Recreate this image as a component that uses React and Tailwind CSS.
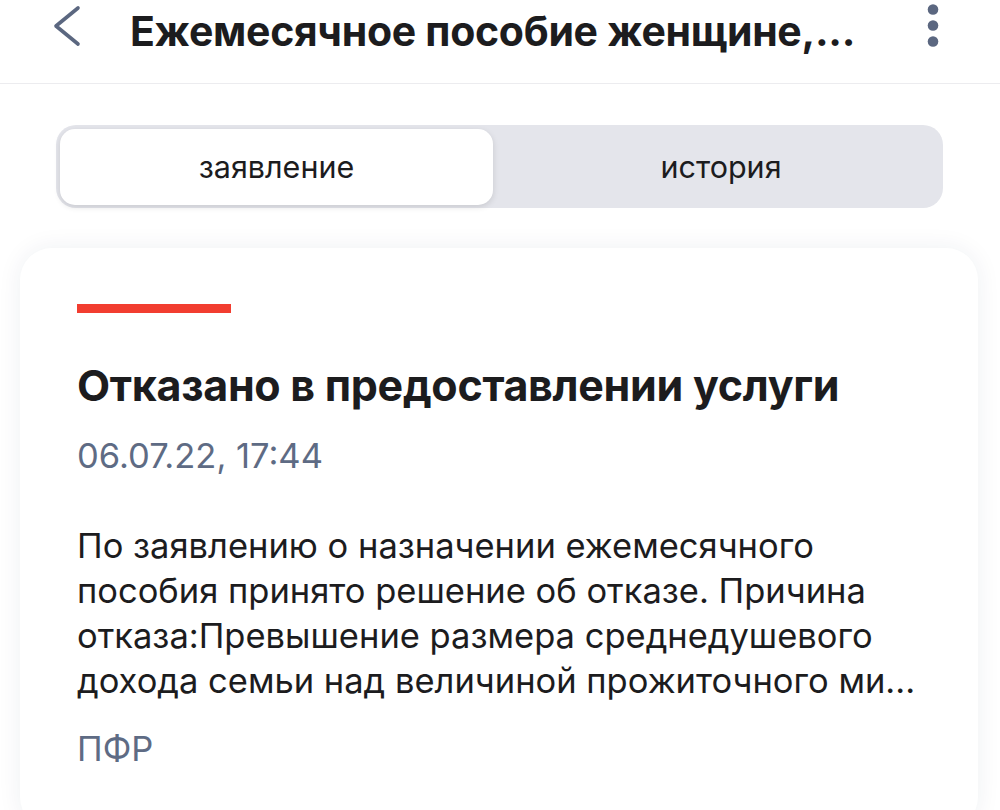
import React, { useState } from 'react';

const font = { fontFamily: 'Inter, "Noto Sans", sans-serif' };

function BackIcon() {
  return (
    <svg width="32" height="48" viewBox="0 0 32 48" fill="none">
      <path d="M28 4 L6 22 L28 40" stroke="#5b6780" strokeWidth="3.6" strokeLinecap="round" strokeLinejoin="round" />
    </svg>
  );
}

function MoreIcon() {
  return (
    <svg width="14" height="48" viewBox="0 0 14 48" fill="#5b6780">
      <circle cx="7" cy="5.5" r="5.3" />
      <circle cx="7" cy="21.5" r="5.3" />
      <circle cx="7" cy="37.5" r="5.3" />
    </svg>
  );
}

export default function App() {
  const [tab, setTab] = useState('request');

  return (
    <div className="min-h-[810px] bg-white overflow-hidden" style={font}>
      {/* Top bar */}
      <header className="h-[84px] flex items-start border-b border-[#ececef] pl-[50px] pr-[60px]">
        <button className="mt-[4px] w-[32px] h-[48px]">
          <BackIcon />
        </button>
        <h1 className="ml-[48px] mt-[6px] flex-1 text-[41px] leading-[50px] font-bold text-[#1c1c1e] tracking-[-0.3px] whitespace-nowrap">
          Ежемесячное пособие женщине,...
        </h1>
        <button className="mt-[4px]">
          <MoreIcon />
        </button>
      </header>

      {/* Segmented control */}
      <div className="pt-[41px] pl-[56px] pr-[57px]">
        <div className="flex h-[83px] rounded-[20px] bg-[#e4e5eb] p-[4px] pb-[3px]">
          <button
            onClick={() => setTab('request')}
            className={`w-[433px] rounded-[15px] text-[30.5px] text-[#1c1c1e] ${tab === 'request' ? 'bg-white shadow-[0_2px_6px_rgba(0,0,0,0.12)]' : ''}`}
          >
            заявление
          </button>
          <button
            onClick={() => setTab('history')}
            className={`flex-1 pl-[10px] rounded-[15px] text-[30.5px] text-[#1c1c1e] ${tab === 'history' ? 'bg-white shadow-[0_2px_6px_rgba(0,0,0,0.12)]' : ''}`}
          >
            история
          </button>
        </div>
      </div>

      {/* Status card */}
      <div className="pt-[40px] pl-[20px] pr-[22px]">
        <div className="bg-white rounded-[32px] shadow-[0_0_24px_rgba(30,40,80,0.07)] pl-[57px] pr-[40px] pt-[56px] pb-[60px]">
          <div className="w-[154px] h-[9px] bg-[#f23d30]" />
          <h2 className="mt-[47px] text-[43px] leading-[50px] font-bold text-[#1c1c1e] tracking-[-0.3px] whitespace-nowrap">
            Отказано в предоставлении услуги
          </h2>
          <p className="mt-[26px] text-[34.5px] leading-[40px] text-[#5e6b84]">06.07.22, 17:44</p>
          <p className="mt-[47px] text-[34.5px] leading-[45px] text-[#1c1c1e]">
            По заявлению о назначении ежемесячного пособия принято решение об отказе. Причина отказа:Превышение размера среднедушевого дохода семьи над величиной прожиточного ми...
          </p>
          <p className="mt-[26px] text-[34.5px] leading-[40px] text-[#5e6b84]">ПФР</p>
        </div>
      </div>
    </div>
  );
}
